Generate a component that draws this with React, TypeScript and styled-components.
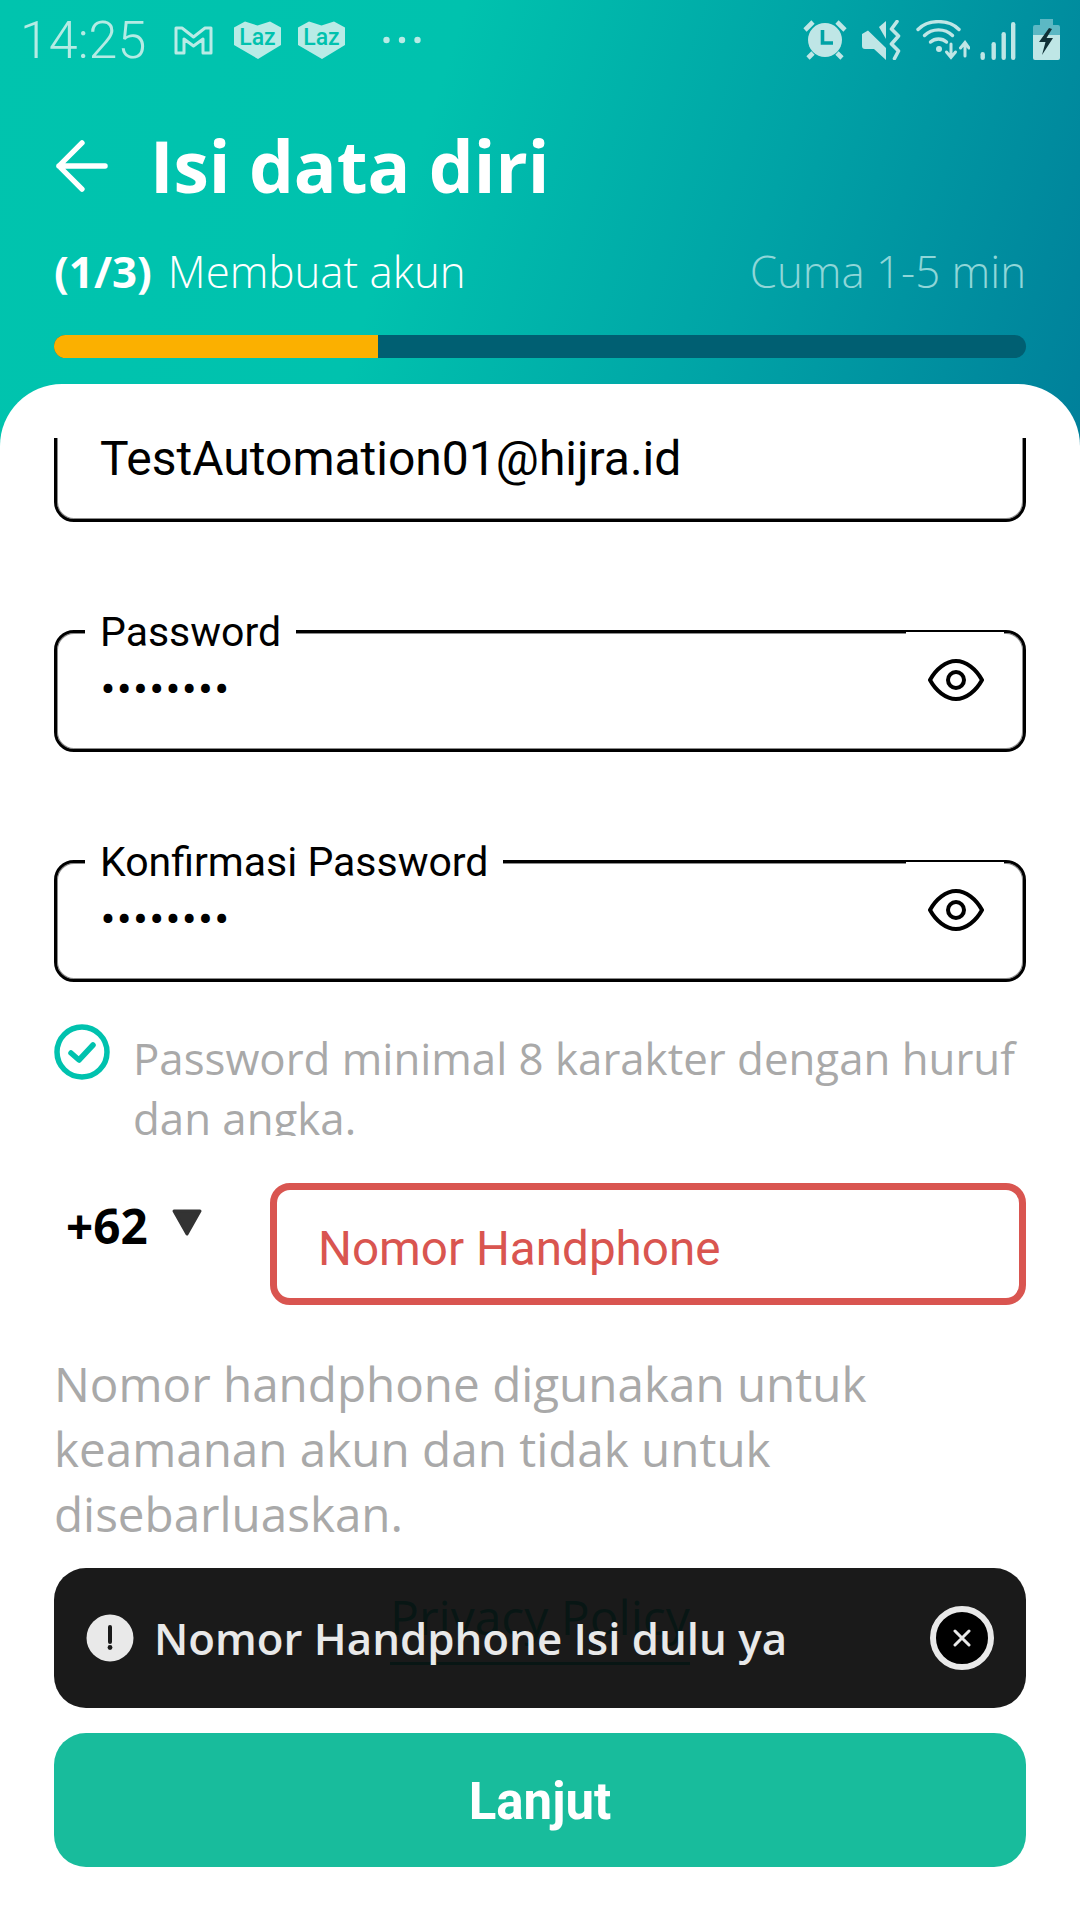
import React from "react";
import styled, { createGlobalStyle } from "styled-components";

const Global = createGlobalStyle`
  html, body { margin: 0; padding: 0; background: #fff; }
  #root { width: 1080px; height: 1920px; }
  * { box-sizing: border-box; }
`;

const Page = styled.div`
  position: relative;
  width: 1080px;
  height: 1920px;
  overflow: hidden;
  display: flex;
  flex-direction: column;
  background: linear-gradient(108deg, #00c4ae 0%, #00c2ae 38%, #00a3a6 68%, #007f9a 100%) top left / 1080px 460px no-repeat;
`;

const Header = styled.header`
  height: 384px;
  flex: none;
  display: flex;
  flex-direction: column;
`;

const StatusBar = styled.div`
  height: 80px;
  display: flex;
  align-items: center;
  padding: 0 20px;
`;

const Time = styled.span`
  margin: 2px 28px 0 0;
  font: 300 52px/78px Roboto, sans-serif;
  color: #b5ebe4;
`;

const StatusLeft = styled.div`
  display: flex;
  align-items: center;
  gap: 17px;
`;

const StatusRight = styled.div`
  margin-left: auto;
  display: flex;
  align-items: center;
  gap: 15px;
`;

const StatusIcon = styled.svg<{ $ml?: number; $mr?: number }>`
  flex: none;
  margin-left: ${(p) => p.$ml ?? 0}px;
  margin-right: ${(p) => p.$mr ?? 0}px;
`;

const TitleRow = styled.div`
  display: flex;
  align-items: center;
  padding: 0 54px;
  margin-top: 44px;
  height: 84px;
`;

const BackIcon = styled.svg`
  width: 52px;
  height: 52px;
  margin: 0 42px 0 2px;
  flex: none;
`;

const Title = styled.h1`
  margin: 0;
  font: 700 71px/84px "Open Sans", sans-serif;
  color: #fff;
`;

const SubRow = styled.div`
  display: flex;
  justify-content: space-between;
  align-items: baseline;
  padding: 0 54px;
  margin-top: 34px;
  height: 58px;
  font: 300 43.8px/58px "Open Sans", sans-serif;
`;

const Step = styled.span`
  color: #fff;
  b { font-weight: 700; margin-right: 16px; }
`;

const Duration = styled.span`
  color: #8fd6d8;
`;

const Track = styled.div`
  margin: 35px 54px 0;
  height: 23px;
  border-radius: 12px;
  background: #005f72;
  overflow: hidden;
`;

const Fill = styled.div`
  width: 324px;
  height: 100%;
  background: #fbb000;
`;

const Sheet = styled.main`
  position: relative;
  flex: 1;
  background: #fff;
  border-radius: 62px 62px 0 0;
  display: flex;
  flex-direction: column;
  padding: 54px 54px 53px;
  min-height: 0;
`;

const Scroll = styled.div`
  flex: 1;
  min-height: 0;
  overflow: hidden;
  margin-bottom: 25px;
`;

const ScrollInner = styled.div`
  margin-top: -38px;
  display: flex;
  flex-direction: column;
`;

const Field = styled.div`
  position: relative;
  height: 122px;
  margin-bottom: 108px;
  border: 3px solid #000;
  border-radius: 20px;
  box-shadow: inset 0 0 0 1px rgba(0, 0, 0, 0.45);
  background: #fff;
  color: #000;
`;

const FieldValue = styled.div`
  position: absolute;
  left: 43px;
  top: 25px;
  white-space: nowrap;
  font: 400 48px/62px Roboto, sans-serif;
`;

const FieldLabel = styled.span`
  position: absolute;
  left: 28px;
  top: -25px;
  padding: 0 15px;
  background: #fff;
  white-space: nowrap;
  font: 400 41px/48px Roboto, sans-serif;
`;

const Dots = styled.span`
  position: absolute;
  left: 44px;
  top: 33px;
  font: 700 38px/48px Roboto, sans-serif;
  letter-spacing: 2.6px;
`;

const BorderPatch = styled.span`
  position: absolute;
  right: 19px;
  top: -1px;
  width: 98px;
  height: 2px;
  background: #fff;
`;

const Eye = styled.svg`
  position: absolute;
  right: 39px;
  top: 25px;
  width: 56px;
  height: 44px;
`;

const RuleRow = styled.div`
  display: flex;
  align-items: flex-start;
  margin: -66px 0 0 0;
  height: 112px;
  overflow: hidden;
  flex: none;
`;

const RuleIcon = styled.svg`
  width: 56px;
  height: 56px;
  flex: none;
  margin-right: 23px;
`;

const RuleText = styled.p`
  margin: 0;
  padding-top: 4px;
  font: 400 43.8px/60px "Open Sans", sans-serif;
  color: #a9a9a9;
`;

const PhoneRow = styled.div`
  display: flex;
  align-items: flex-start;
  margin-top: 47px;
`;

const Dial = styled.div`
  width: 216px;
  padding: 13px 0 0 12px;
  display: flex;
  align-items: center;
  font: 700 47.6px/60px "Open Sans", sans-serif;
  color: #000;
`;

const Caret = styled.svg`
  width: 32px;
  height: 28px;
  margin: -6px 0 0 23px;
`;

const PhoneBox = styled.div`
  flex: 1;
  height: 122px;
  border: 7px solid #d95550;
  border-radius: 20px;
  padding: 29px 0 0 41px;
  font: 400 47.6px/60px Roboto, sans-serif;
  color: #d95550;
`;

const Helper = styled.p`
  margin: 46px 0 0;
  width: 900px;
  font: 400 47.6px/65px "Open Sans", sans-serif;
  color: #a9a9a9;
`;

const Privacy = styled.a`
  align-self: center;
  margin-top: 40px;
  padding-bottom: 14px;
  font: 400 48px/62px "Open Sans", sans-serif;
  color: #00c2ae;
  border-bottom: 3px solid #00c2ae;
  text-decoration: none;
`;

const Toast = styled.div`
  position: absolute;
  left: 54px;
  right: 54px;
  top: 1184px;
  height: 140px;
  border-radius: 32px;
  background: rgba(9, 9, 9, 0.93);
  display: flex;
  align-items: center;
  padding: 0 32px;
  color: #e9e9e9;
`;

const ToastIcon = styled.svg`
  width: 48px;
  height: 48px;
  flex: none;
`;

const ToastText = styled.span`
  margin-left: 20px;
  flex: 1;
  font: 600 43.8px/60px "Open Sans", sans-serif;
`;

const CloseBtn = styled.span`
  width: 64px;
  height: 64px;
  border-radius: 50%;
  border: 6px solid #e9e9e9;
  background: #000;
  display: flex;
  align-items: center;
  justify-content: center;
`;

const PrimaryButton = styled.button`
  flex: none;
  height: 134px;
  border: 0;
  border-radius: 32px;
  background: #18bc9c;
  color: #fff;
  padding: 2px 0 0;
  font: 700 51px/134px Roboto, sans-serif;
`;

const LIGHT = "#b9ebe6";
const PALE = "#bfe6e6";

const LazIcon = () => (
  <svg width="47" height="38" viewBox="0 0 47 38">
    <path d="M0 6.5 L11 0.5 L23.5 4.5 L36 0.5 L47 6.5 V24 L24 38 L0 24 Z" fill={LIGHT} strokeLinejoin="round" />
    <text x="23.5" y="23.5" textAnchor="middle" fontFamily="Roboto, sans-serif" fontWeight="500" fontSize="23" fill="#00c2ae">Laz</text>
  </svg>
);

const MailIcon = () => (
  <StatusIcon width="39" height="29" viewBox="0 0 39 29" fill="none" stroke={LIGHT} strokeWidth="3" strokeLinejoin="round" $mr={4}>
    <path d="M2 2 H8 L19.5 11 L31 2 H37 V27 H29 V13 L19.5 20 L10 13 V27 H2 Z" />
  </StatusIcon>
);

const DotsIcon = () => (
  <StatusIcon width="38" height="8" viewBox="0 0 38 8" fill={LIGHT} $ml={21}>
    <circle cx="3.5" cy="4" r="3.2" /><circle cx="19" cy="4" r="3.2" /><circle cx="34.5" cy="4" r="3.2" />
  </StatusIcon>
);

const AlarmIcon = () => (
  <StatusIcon width="44" height="40" viewBox="0 0 44 40" fill={PALE}>
    <circle cx="22" cy="20" r="17" />
    <path d="M2 10 L10 2 M42 10 L34 2 M10 33 L5 38 M34 33 L39 38" stroke={PALE} strokeWidth="4.6" />
    <path d="M19.5 10 V23 H30" fill="none" stroke="#00a3a6" strokeWidth="3.6" />
  </StatusIcon>
);

const MuteIcon = () => (
  <StatusIcon width="39" height="40" viewBox="0 0 39 40" fill={PALE}>
    <path d="M0 14 L6 10.5 L24 28 V40 L12 29 H3 Q0 29 0 26 Z" />
    <path d="M17 7 L24 1 V19 Z" />
    <path d="M35 1.5 L29.5 9 L36.5 16 L29.5 24 L36.5 31 L32.5 38.5" fill="none" stroke={PALE} strokeWidth="3.6" strokeLinecap="round" strokeLinejoin="round" />
  </StatusIcon>
);

const WifiIcon = () => (
  <StatusIcon width="54" height="40" viewBox="0 0 54 40" fill="none" stroke={PALE} strokeLinecap="round" $mr={-5}>
    <path d="M2 9.5 C12 -1 33 -1 43 9.5" strokeWidth="3.4" />
    <path d="M8.5 15.5 C16 8 29 8 36.5 15.5" strokeWidth="3.4" />
    <path d="M14.5 22 C19 18 26 18 30.5 22" strokeWidth="3.4" />
    <circle cx="23" cy="29" r="3" fill={PALE} stroke="none" />
    <path d="M35 24 V37 M30.5 32 L35 37.5 L39.5 32" strokeWidth="3" />
    <path d="M49 36 V23 M44.5 28 L49 22.5 L53 28" strokeWidth="3" />
  </StatusIcon>
);

const SignalIcon = () => (
  <StatusIcon width="36" height="40" viewBox="0 0 36 40" fill={PALE} $mr={2}>
    <rect x="0.5" y="32" width="4.4" height="8" rx="2.2" />
    <rect x="11.5" y="22" width="4.4" height="18" rx="2.2" />
    <rect x="21.5" y="12" width="4.4" height="28" rx="2.2" />
    <rect x="31" y="2" width="4.4" height="38" rx="2.2" />
  </StatusIcon>
);

const BatteryIcon = () => (
  <StatusIcon width="27" height="42" viewBox="0 0 27 42">
    <path d="M7 0 H20 V6 H25 Q27 6 27 8 V16 H0 V8 Q0 6 2 6 H7 Z" fill="#5cb8c4" />
    <path d="M0 16 H27 V39 Q27 41 25 41 H2 Q0 41 0 39 Z" fill={PALE} />
    <path d="M16 9 L6 23 H12.5 L9 36 L20 19 H13.5 L19 10 Z" fill="#0f2f36" />
  </StatusIcon>
);

const EyeIcon = () => (
  <Eye viewBox="0 0 56 44" fill="none" stroke="#000" strokeWidth="4">
    <path d="M2 22 C8 11 18 3 28 3 C38 3 48 11 54 22 C48 33 38 41 28 41 C18 41 8 33 2 22 Z" />
    <circle cx="28" cy="22" r="8" />
  </Eye>
);

const PasswordField = ({ label }: { label: string }) => (
  <Field>
    <FieldLabel>{label}</FieldLabel>
    <BorderPatch />
    <Dots>••••••••</Dots>
    <EyeIcon />
  </Field>
);

export default function App() {
  return (
    <Page>
      <Global />
      <Header>
        <StatusBar>
          <Time>14:25</Time>
          <StatusLeft>
            <MailIcon />
            <LazIcon />
            <LazIcon />
            <DotsIcon />
          </StatusLeft>
          <StatusRight>
            <AlarmIcon />
            <MuteIcon />
            <WifiIcon />
            <SignalIcon />
            <BatteryIcon />
          </StatusRight>
        </StatusBar>
        <TitleRow>
          <BackIcon viewBox="0 0 54 54" fill="none" stroke="#fff" strokeWidth="5.5" strokeLinecap="round" strokeLinejoin="round">
            <path d="M51 27 H3 M27 3 L3 27 L27 51" />
          </BackIcon>
          <Title>Isi data diri</Title>
        </TitleRow>
        <SubRow>
          <Step><b>(1/3)</b>Membuat akun</Step>
          <Duration>Cuma 1-5 min</Duration>
        </SubRow>
        <Track><Fill /></Track>
      </Header>
      <Sheet>
        <Scroll>
          <ScrollInner>
            <Field>
              <FieldValue>TestAutomation01@hijra.id</FieldValue>
            </Field>
            <PasswordField label="Password" />
            <PasswordField label="Konfirmasi Password" />
            <RuleRow>
              <RuleIcon viewBox="0 0 56 56" fill="none">
                <circle cx="28" cy="28" r="25" stroke="#00c2ae" strokeWidth="5.5" />
                <path d="M17 29 L25 36 L39 21" stroke="#00c2ae" strokeWidth="5.5" strokeLinecap="round" strokeLinejoin="round" />
              </RuleIcon>
              <RuleText>Password minimal 8 karakter dengan huruf dan angka.</RuleText>
            </RuleRow>
            <PhoneRow>
              <Dial>
                +62
                <Caret viewBox="0 0 32 28">
                  <path d="M3 2 H29 L16 25 Z" fill="#333" stroke="#333" strokeWidth="3" strokeLinejoin="round" />
                </Caret>
              </Dial>
              <PhoneBox>Nomor Handphone</PhoneBox>
            </PhoneRow>
            <Helper>Nomor handphone digunakan untuk keamanan akun dan tidak untuk disebarluaskan.</Helper>
            <Privacy href="#">Privacy Policy</Privacy>
          </ScrollInner>
        </Scroll>
        <PrimaryButton>Lanjut</PrimaryButton>
        <Toast>
          <ToastIcon viewBox="0 0 48 48">
            <circle cx="24" cy="24" r="23.5" fill="#e9e9e9" />
            <path d="M24 13 V28" stroke="#1a1a1a" strokeWidth="4" strokeLinecap="round" />
            <circle cx="24" cy="33.5" r="2.4" fill="#1a1a1a" />
          </ToastIcon>
          <ToastText>Nomor Handphone Isi dulu ya</ToastText>
          <CloseBtn>
            <svg width="18" height="18" viewBox="0 0 18 18" stroke="#e9e9e9" strokeWidth="3" strokeLinecap="round">
              <path d="M2 2 L16 16 M16 2 L2 16" />
            </svg>
          </CloseBtn>
        </Toast>
      </Sheet>
    </Page>
  );
}
